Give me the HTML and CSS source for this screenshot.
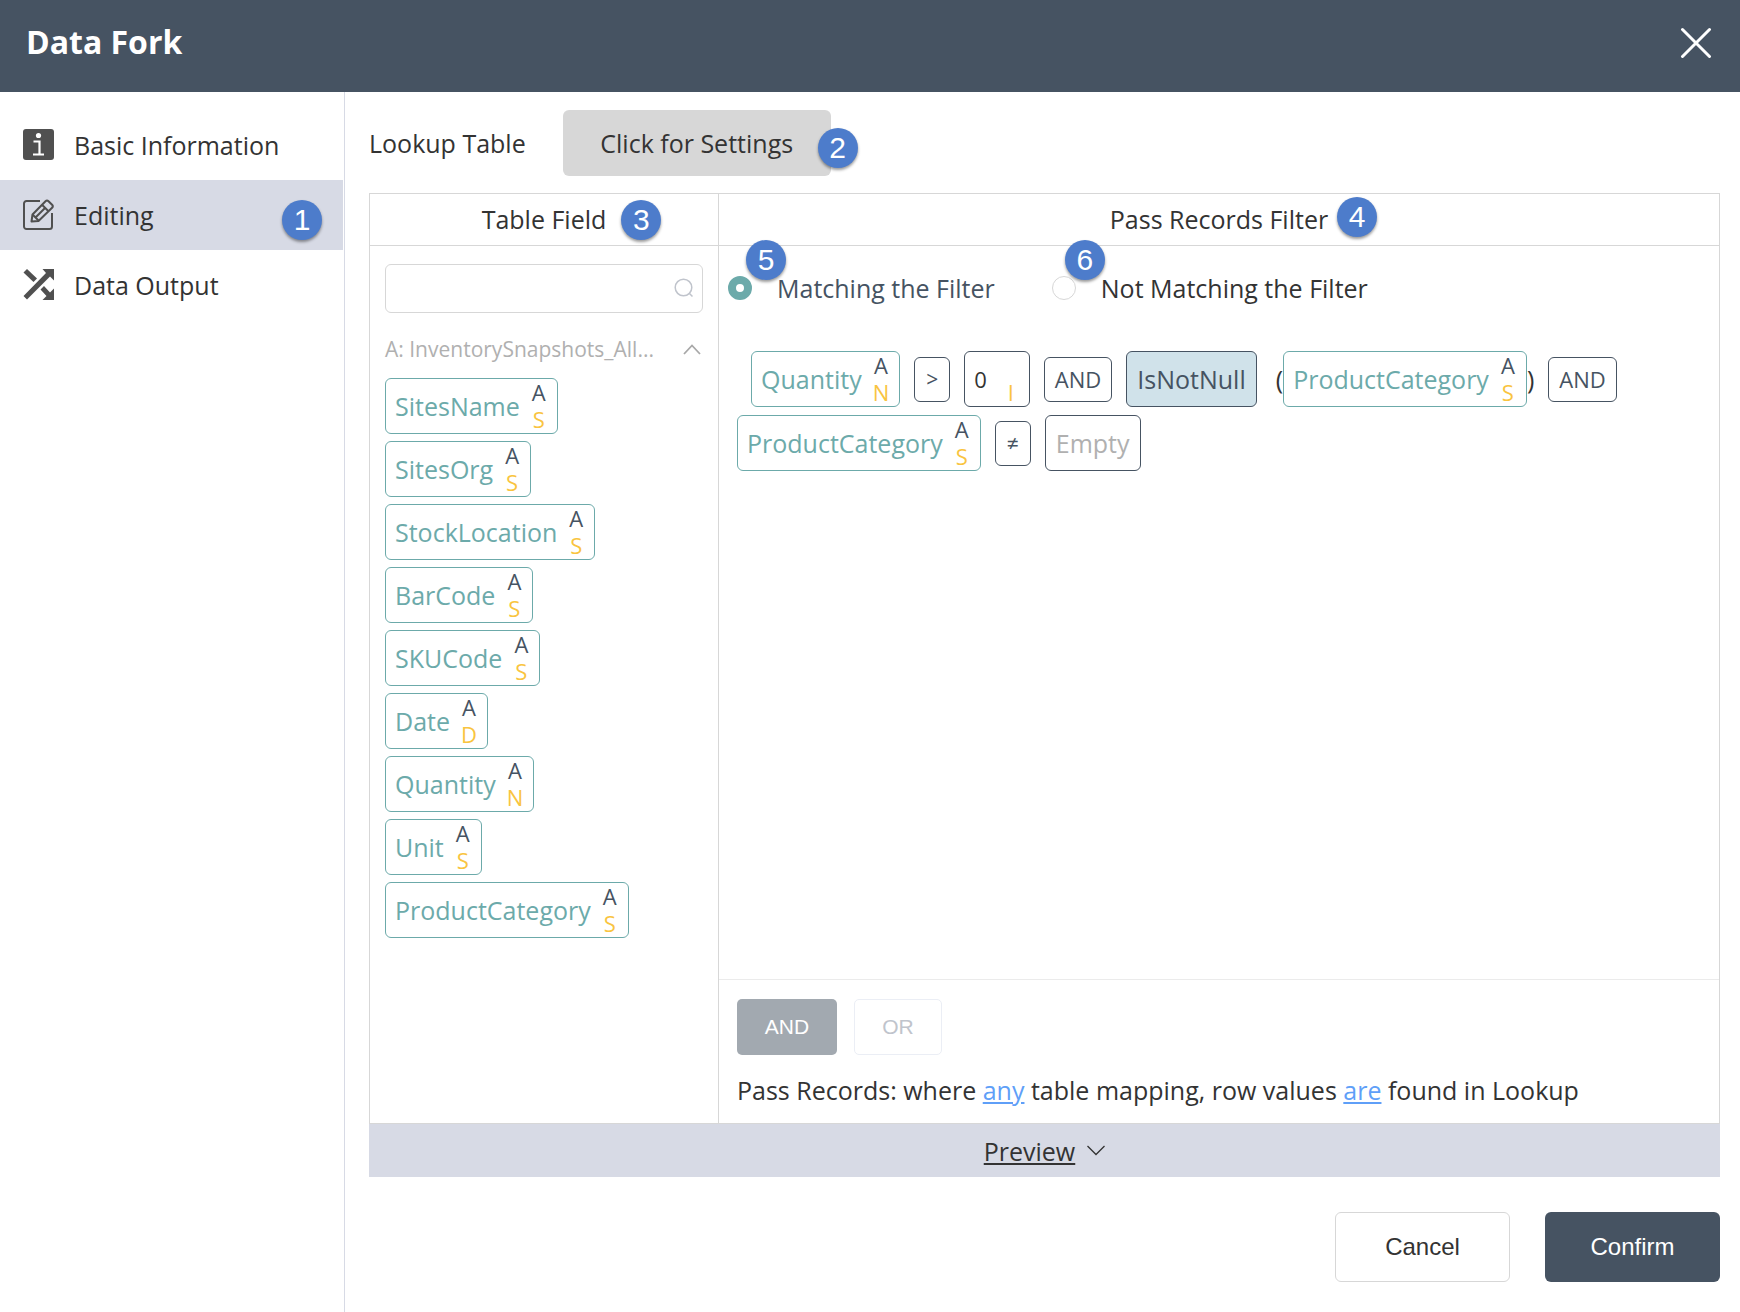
FILE: index.html
```html
<!DOCTYPE html>
<html lang="en">
<head>
  <meta charset="UTF-8">
  <title>Data Fork</title>
  <link rel="stylesheet" href="styles.css">
</head>
<body>

  <header class="topbar">
    <h1>Data Fork</h1>
    <button class="close" aria-label="Close">
      <svg width="32" height="32" viewBox="0 0 32 32"><path d="M2.5 3.5l27 27M29.5 3.5l-27 27" stroke="#fff" stroke-width="3" stroke-linecap="round"/></svg>
    </button>
  </header>

  <div class="layout">
    <nav class="sidebar">
      <a href="#basic" class="nav-item">
        <svg width="31" height="31" viewBox="0 0 31 31">
          <rect width="31" height="31" rx="3" fill="#505050"/>
          <circle cx="15.500" cy="6.500" r="2.600" fill="#fff"/>
          <path d="M10.500 12.500h6V25M10 25.500h11" fill="none" stroke="#fff" stroke-width="2.200"/>
        </svg>
        Basic Information
      </a>
      <a href="#editing" class="nav-item active">
        <svg width="31" height="31" viewBox="0 0 31 31" fill="none" stroke="#505050" stroke-width="2" stroke-linejoin="round">
          <path d="M17 2H3.500A2.500 2.500 0 0 0 1 4.500v23A2.500 2.500 0 0 0 3.500 30h23a2.500 2.500 0 0 0 2.500-2.500V14"/>
          <path d="M8.500 22.500l1-7L22.500 2.200q1.500-1.500 3 0l3.600 3.600q1.500 1.500 0 3L15.500 22z"/>
          <path d="M9.500 15.500l6 6M19 5.800l6.500 6.500M12 19L22 9"/>
        </svg>
        Editing
        <span class="badge badge-1">1</span>
      </a>
      <a href="#output" class="nav-item">
        <svg width="31" height="31" viewBox="0 0 31 31" fill="#505050">
          <path d="M4 0l10 9.500-3.500 3.500L.5 3.500z"/>
          <path d="M19.500 0H31v11.500l-4-4L4 30.500.5 27 23 4z"/>
          <path d="M21 17l6 6.500 4-4V31H19.500l4-4-6-6.500z"/>
        </svg>
        Data Output
      </a>
    </nav>

    <main class="content">
      <div class="lookup">
        <span>Lookup Table</span>
        <button class="settings">Click for Settings<span class="badge badge-2">2</span></button>
      </div>

      <div class="panel">
        <section class="fields">
          <h2><span class="title">Table Field<span class="badge badge-3">3</span></span></h2>
          <div class="search">
            <input type="text" aria-label="Search fields">
            <svg width="20" height="20" viewBox="0 0 20 20" fill="none" stroke="#c0c4cc" stroke-width="1.500"><circle cx="9.500" cy="9.500" r="8.300"/><path d="M15.500 15.500l3 3"/></svg>
          </div>
          <div class="group">
            <span>A: InventorySnapshots_All...</span>
            <svg width="18" height="11" viewBox="0 0 18 11" fill="none" stroke="#a8a8a8" stroke-width="1.800"><path d="M1 10l8-8.500 8 8.500"/></svg>
          </div>
          <ul class="field-list">
            <li class="chip">SitesName<span class="marks"><b>A</b><i>S</i></span></li>
            <li class="chip">SitesOrg<span class="marks"><b>A</b><i>S</i></span></li>
            <li class="chip">StockLocation<span class="marks"><b>A</b><i>S</i></span></li>
            <li class="chip">BarCode<span class="marks"><b>A</b><i>S</i></span></li>
            <li class="chip">SKUCode<span class="marks"><b>A</b><i>S</i></span></li>
            <li class="chip">Date<span class="marks"><b>A</b><i>D</i></span></li>
            <li class="chip">Quantity<span class="marks"><b>A</b><i>N</i></span></li>
            <li class="chip">Unit<span class="marks"><b>A</b><i>S</i></span></li>
            <li class="chip">ProductCategory<span class="marks"><b>A</b><i>S</i></span></li>
          </ul>
        </section>

        <section class="filter">
          <h2><span class="title">Pass Records Filter<span class="badge badge-4">4</span></span></h2>
          <div class="options">
            <label class="option checked"><input type="radio" name="match" checked>Matching the Filter<span class="badge badge-5">5</span></label>
            <label class="option"><input type="radio" name="match">Not Matching the Filter<span class="badge badge-6">6</span></label>
          </div>
          <div class="expression">
            <span class="chip first">Quantity<span class="marks"><b>A</b><i>N</i></span></span>
            <span class="op sign">&gt;</span>
            <span class="chip value">0<span class="marks"><b></b><i>I</i></span></span>
            <span class="op">AND</span>
            <span class="chip func">IsNotNull</span>
            <span class="args">(<span class="chip">ProductCategory<span class="marks"><b>A</b><i>S</i></span></span>)</span>
            <span class="op">AND</span>
            <span class="chip">ProductCategory<span class="marks"><b>A</b><i>S</i></span></span>
            <span class="op sign">≠</span>
            <span class="chip empty">Empty</span>
          </div>
          <div class="mapping">
            <div class="toggle">
              <button class="and">AND</button>
              <button class="or">OR</button>
            </div>
            <p>Pass Records: where <a href="#any">any</a> table mapping, row values <a href="#are">are</a> found in Lookup</p>
          </div>
        </section>
      </div>

      <button class="preview">
        <span>Preview</span>
        <svg width="18" height="11" viewBox="0 0 18 11" fill="none" stroke="#333" stroke-width="1.300"><path d="M.5 1L9 9.500 17.500 1"/></svg>
      </button>

      <div class="actions">
        <button class="cancel">Cancel</button>
        <button class="confirm">Confirm</button>
      </div>
    </main>
  </div>

</body>
</html>
```

FILE: styles.css
```css
* {
  box-sizing: border-box;
}

body {
  margin: 0;
  min-height: 100vh;
  display: flex;
  flex-direction: column;
  font-family: "Open Sans", "Noto Sans", sans-serif;
  font-size: 25px;
  line-height: 36px;
  color: #333;
  background: #fff;
}

button {
  font-family: inherit;
  font-size: inherit;
  line-height: inherit;
  color: inherit;
  border: none;
  padding: 0;
  cursor: pointer;
}

svg {
  flex: none;
}

.topbar {
  display: flex;
  align-items: center;
  justify-content: space-between;
  height: 92px;
  padding: 0 28px 8px 26px;
  background: #465362;
  color: #fff;
}

.topbar h1 {
  margin: 0;
  font-size: 32px;
  line-height: 44px;
}

.close {
  display: flex;
  background: none;
}

.layout {
  flex: 1;
  display: flex;
}

.sidebar {
  flex: none;
  width: 345px;
  padding: 18px 1px 0 0;
  border-right: 1px solid #d7dae5;
}

.nav-item {
  position: relative;
  display: flex;
  align-items: center;
  gap: 20px;
  height: 70px;
  padding: 0 0 1px 23px;
  color: #333;
  text-decoration: none;
}

.nav-item.active {
  background: #d7dae5;
}

.badge {
  position: absolute;
  width: 40px;
  height: 40px;
  border-radius: 50%;
  background: #4d7ccb;
  box-shadow: 0 2px 3px rgba(0,0,0,0.4);
  color: #fff;
  font-family: "Liberation Sans", Arial, sans-serif;
  font-size: 30px;
  font-weight: 400;
  line-height: 39px;
  text-align: center;
}

.badge-1 {
  right: 21px;
  top: 20px;
}

.badge-2 {
  right: -27px;
  top: 18px;
}

.badge-3,
.badge-4 {
  left: 100%;
  top: -1px;
  margin-left: 15px;
}

.badge-4 {
  top: -4px;
  margin-left: 9px;
}

.badge-5,
.badge-6 {
  left: 18px;
  top: -30px;
}

.badge-6 {
  left: 13px;
}

.content {
  flex: 1;
  display: flex;
  flex-direction: column;
  padding: 18px 20px 30px 24px;
}

.lookup {
  display: flex;
  align-items: center;
  gap: 37px;
  margin-bottom: 17px;
}

.settings {
  position: relative;
  width: 268px;
  height: 66px;
  border-radius: 6px;
  background: #d7d7d7;
}

.panel {
  flex: 1;
  display: flex;
  border: 1px solid #d7d7d7;
}

.fields {
  flex: none;
  width: 349px;
  border-right: 1px solid #d7d7d7;
}

.filter {
  flex: 1;
  display: flex;
  flex-direction: column;
}

.panel h2 {
  margin: 0;
  padding: 7px 0 8px;
  border-bottom: 1px solid #d7d7d7;
  font-size: 25px;
  font-weight: 400;
  text-align: center;
}

.title {
  position: relative;
  display: inline-block;
}

.search {
  position: relative;
  margin: 18px 15px 0;
}

.search input {
  display: block;
  width: 100%;
  height: 49px;
  padding: 0 40px 0 12px;
  border: 1px solid #d7d7d7;
  border-radius: 6px;
  font: inherit;
}

.search svg {
  position: absolute;
  right: 9px;
  top: 14px;
}

.group {
  display: flex;
  align-items: center;
  justify-content: space-between;
  margin: 18px 17px 11px 15px;
  color: #b0b0b0;
  font-size: 21px;
}

.field-list {
  display: flex;
  flex-direction: column;
  align-items: flex-start;
  gap: 7px;
  margin: 0 15px 15px;
  padding: 0;
  list-style: none;
}

.chip {
  display: inline-flex;
  align-items: center;
  gap: 11px;
  height: 56px;
  padding: 0 10px 0 9px;
  border: 1px solid #6caaaa;
  border-radius: 6px;
  color: #6caaaa;
}

.marks {
  min-width: 16px;
  font-size: 22px;
  line-height: 27px;
  text-align: center;
}

.marks b,
.marks i {
  display: block;
  height: 27px;
  font-style: normal;
  font-weight: 400;
}

.marks b {
  color: #465362;
}

.marks i {
  color: #f9c440;
}

.options {
  display: flex;
  gap: 57px;
  padding: 24px 9px 0;
}

.option {
  position: relative;
  display: flex;
  align-items: center;
  gap: 25px;
}

.option.checked {
  color: #465362;
}

.option input {
  appearance: none;
  width: 24px;
  height: 24px;
  margin: 0;
  border: 1px solid #d7d7d7;
  border-radius: 50%;
  background: #fff;
}

.option input:checked {
  border: 8px solid #6caaaa;
}

.expression {
  flex: 1;
  display: flex;
  flex-wrap: wrap;
  align-items: center;
  align-content: flex-start;
  gap: 8px 14px;
  padding: 45px 18px 20px;
}

.first {
  margin-left: 14px;
}

.op {
  height: 45px;
  padding: 0 10px;
  border: 1px solid #465362;
  border-radius: 6px;
  color: #465362;
  font-size: 22px;
  line-height: 42px;
}

.sign {
  width: 36px;
  padding: 0;
  font-size: 21px;
  text-align: center;
}

.value,
.func,
.empty {
  border-color: #465362;
}

.value {
  color: #333;
  font-size: 22px;
  gap: 16px;
}

.func,
.empty {
  padding: 0 10px;
}

.func {
  background: #d0e2ea;
  color: #465362;
}

.empty {
  color: #b0b0b0;
}

.args {
  display: flex;
  align-items: center;
  margin-left: 5px;
}

.mapping {
  padding: 19px 18px 15px;
  border-top: 1px solid #ebebeb;
}

.toggle {
  display: flex;
  gap: 17px;
}

.toggle button {
  height: 56px;
  border-radius: 5px;
  font-family: "Liberation Sans", Arial, sans-serif;
  font-size: 21px;
}

.and {
  width: 100px;
  background: #a2a9b0;
  color: #fff;
}

.toggle .or {
  width: 88px;
  border: 1px solid #ebeef5;
  background: #fff;
  color: #c0c4cc;
}

.mapping p {
  margin: 17px 0 0;
}

.mapping a {
  color: #5f9ff8;
}

.preview {
  display: flex;
  align-items: center;
  justify-content: center;
  gap: 12px;
  height: 53px;
  background: #d7dae5;
}

.preview span {
  text-decoration: underline;
}

.actions {
  display: flex;
  justify-content: flex-end;
  gap: 35px;
  margin-top: 35px;
}

.actions button {
  width: 175px;
  height: 70px;
  border-radius: 6px;
  font-family: "Liberation Sans", Arial, sans-serif;
  font-size: 24px;
}

.actions .cancel {
  border: 1px solid #d7d7d7;
  background: #fff;
}

.confirm {
  background: #465362;
  color: #fff;
}
```
